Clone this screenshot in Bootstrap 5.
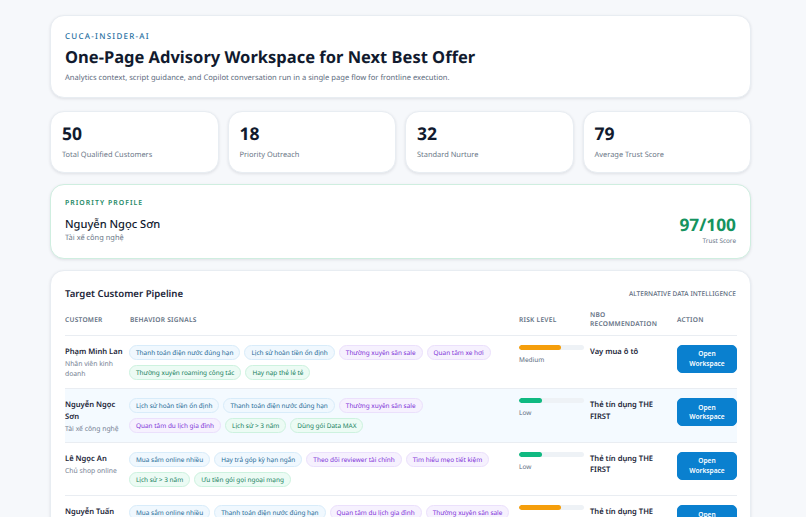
<!DOCTYPE html>
<html lang="vi">
<head>
<meta charset="utf-8">
<title>CUCA-INSIDER-AI</title>
<link href="https://cdn.jsdelivr.net/npm/bootstrap@5.3.0/dist/css/bootstrap.min.css" rel="stylesheet">
<style>
html,body{height:517px;overflow:hidden}
body{background:#f6f8fb;font-family:"Noto Sans",sans-serif;color:#0f172a;padding:15px 55px 0 50px;text-rendering:geometricPrecision}
.panel{background:#fff;border:1px solid #e8edf2;border-radius:14px;box-shadow:0 1px 3px rgba(15,23,42,.1)}
.hero-box{height:83px;padding:15px 14px 0;margin-bottom:13px}
.eyebrow{font-size:8px;letter-spacing:1.25px;color:#1f6f9f;font-weight:500;line-height:12px;margin-bottom:2px}
.hero-title{font-size:16.5px;font-weight:700;line-height:24px;margin:0 0 3px;color:#111a2e}
.hero-sub{font-size:7.6px;line-height:12px;color:#5d6b7e;margin:0}
.kpi-row{display:grid;grid-template-columns:repeat(4,1fr);gap:9px;margin-bottom:11px}
.kpi-box{height:62px;padding:10px 11px 0}
.kpi-num{font-size:17.5px;font-weight:700;line-height:24px;color:#111a2e}
.kpi-lbl{font-size:7.45px;line-height:12px;color:#6b7788;margin-top:3px}
.prio-box{height:75px;border-color:#cfeee0;padding:13px 14px 0;margin-bottom:11px}
.prio-eyebrow{font-size:6.9px;letter-spacing:1.05px;color:#1f8a68;font-weight:600;line-height:12px;margin-bottom:6px}
.prio-name{font-size:11.1px;font-weight:500;line-height:17px;color:#111a2e}
.prio-job{font-size:7.45px;line-height:10px;color:#6b7788}
.score-num{font-size:17.3px;font-weight:700;line-height:20px;color:#15935f;text-align:right}
.score-lbl{font-size:6.4px;line-height:10px;color:#6b7788;text-align:right}
.pipe-box{padding:15px 14px 0;height:400px}
.pipe-title{font-size:9.6px;font-weight:600;line-height:16px;color:#1b2538}
.pipe-tag{font-size:6.5px;letter-spacing:.05px;color:#5d6b7e;font-weight:500}
.pipe-table{table-layout:fixed;width:100%;margin:1px 0 0}
.pipe-table th{font-size:6.6px;font-weight:600;letter-spacing:.25px;color:#667385;line-height:9.5px;padding:1px 8px 0 0;vertical-align:middle;border-bottom:1px solid #e9edf2;height:32px;background:transparent;box-shadow:none}
.pipe-table td{padding:9px 0 0;vertical-align:top;border-bottom:1px solid #e9edf2;height:53.5px;background:transparent;box-shadow:none}
.pipe-table tr.hl td{background:#f4faff;--bs-table-bg:#f4faff}
.cust-name{font-size:7.6px;font-weight:600;line-height:11.5px;color:#1b2538;padding-top:2px}
.cust-job{font-size:6.8px;line-height:10px;color:#758193;margin-top:1px}
.chip-wrap{display:flex;flex-wrap:wrap;gap:5px 4px;padding-right:6px;margin-left:-1px}
.chip{font-size:6.45px;line-height:13px;padding:0 6px;border:1px solid;border-radius:99px;white-space:nowrap;display:inline-block}
.c-b{background:#f0f8fe;border-color:#d8ecfa;color:#1d6a96}
.c-p{background:#f6f1fe;border-color:#ebe0fc;color:#7e32d8}
.c-g{background:#ecfbf4;border-color:#cdf2df;color:#15805c}
.risk-track{height:5px;width:65px;background:#eef2f6;border-radius:9px;overflow:hidden}
.risk-fill{height:100%;border-radius:9px}
.risk-m{background:#f59e0b}
.risk-l{background:#10b981}
.risk-lbl{font-size:6.5px;line-height:10px;margin-top:5px;color:#5d6b7e}
.nbo{font-size:7.6px;font-weight:600;line-height:11.5px;color:#1b2538;padding:2px 8px 0 0}
.open-btn{width:60px;height:28px;background:#0a80cf;border:1px solid #0a80cf;color:#fff;border-radius:5px;font-size:6.6px;font-weight:600;line-height:9.4px;padding:0 8px}
.open-btn:hover{background:#0a80cf;color:#fff}
</style>
</head>
<body>
<section class="panel hero-box">
  <div class="eyebrow">CUCA-INSIDER-AI</div>
  <h1 class="hero-title">One-Page Advisory Workspace for Next Best Offer</h1>
  <p class="hero-sub">Analytics context, script guidance, and Copilot conversation run in a single page flow for frontline execution.</p>
</section>
<section class="kpi-row">
  <div class="panel kpi-box"><div class="kpi-num">50</div><div class="kpi-lbl">Total Qualified Customers</div></div>
  <div class="panel kpi-box"><div class="kpi-num">18</div><div class="kpi-lbl">Priority Outreach</div></div>
  <div class="panel kpi-box"><div class="kpi-num">32</div><div class="kpi-lbl">Standard Nurture</div></div>
  <div class="panel kpi-box"><div class="kpi-num">79</div><div class="kpi-lbl">Average Trust Score</div></div>
</section>
<section class="panel prio-box">
  <div class="prio-eyebrow">PRIORITY PROFILE</div>
  <div class="d-flex justify-content-between align-items-start">
    <div><div class="prio-name">Nguyễn Ngọc Sơn</div><div class="prio-job">Tài xế công nghệ</div></div>
    <div><div class="score-num">97/100</div><div class="score-lbl">Trust Score</div></div>
  </div>
</section>
<section class="panel pipe-box">
  <div class="d-flex justify-content-between align-items-center">
    <div class="pipe-title">Target Customer Pipeline</div>
    <div class="pipe-tag">ALTERNATIVE DATA INTELLIGENCE</div>
  </div>
  <table class="table pipe-table">
    <colgroup><col style="width:65px"><col style="width:389px"><col style="width:71px"><col style="width:87px"><col style="width:60px"></colgroup>
    <thead><tr><th>CUSTOMER</th><th>BEHAVIOR SIGNALS</th><th>RISK LEVEL</th><th>NBO RECOMMENDATION</th><th>ACTION</th></tr></thead>
    <tbody>
      <tr>
        <td><div class="cust-name">Phạm Minh Lan</div><div class="cust-job">Nhân viên kinh doanh</div></td>
        <td><div class="chip-wrap"><span class="chip c-b">Thanh toán điện nước đúng hạn</span><span class="chip c-b">Lịch sử hoàn tiền ổn định</span><span class="chip c-p">Thường xuyên săn sale</span><span class="chip c-p">Quan tâm xe hơi</span><span class="chip c-g">Thường xuyên roaming công tác</span><span class="chip c-g">Hay nạp thẻ lẻ tẻ</span></div></td>
        <td><div class="risk-track"><div class="risk-fill risk-m" style="width:65%"></div></div><div class="risk-lbl">Medium</div></td>
        <td><div class="nbo">Vay mua ô tô</div></td>
        <td><button class="btn open-btn">Open Workspace</button></td>
      </tr>
      <tr class="hl">
        <td><div class="cust-name">Nguyễn Ngọc Sơn</div><div class="cust-job">Tài xế công nghệ</div></td>
        <td><div class="chip-wrap"><span class="chip c-b">Lịch sử hoàn tiền ổn định</span><span class="chip c-b">Thanh toán điện nước đúng hạn</span><span class="chip c-p">Thường xuyên săn sale</span><span class="chip c-p">Quan tâm du lịch gia đình</span><span class="chip c-g">Lịch sử &gt; 3 năm</span><span class="chip c-g">Dùng gói Data MAX</span></div></td>
        <td><div class="risk-track"><div class="risk-fill risk-l" style="width:35%"></div></div><div class="risk-lbl">Low</div></td>
        <td><div class="nbo">Thẻ tín dụng THE FIRST</div></td>
        <td><button class="btn open-btn">Open Workspace</button></td>
      </tr>
      <tr>
        <td><div class="cust-name">Lê Ngọc An</div><div class="cust-job">Chủ shop online</div></td>
        <td><div class="chip-wrap"><span class="chip c-b">Mua sắm online nhiều</span><span class="chip c-b">Hay trả góp kỳ hạn ngắn</span><span class="chip c-p">Theo dõi reviewer tài chính</span><span class="chip c-p">Tìm hiểu mẹo tiết kiệm</span><span class="chip c-g">Lịch sử &gt; 3 năm</span><span class="chip c-g">Ưu tiên gói gọi ngoại mạng</span></div></td>
        <td><div class="risk-track"><div class="risk-fill risk-l" style="width:35%"></div></div><div class="risk-lbl">Low</div></td>
        <td><div class="nbo">Thẻ tín dụng THE FIRST</div></td>
        <td><button class="btn open-btn">Open Workspace</button></td>
      </tr>
      <tr>
        <td><div class="cust-name">Nguyễn Tuấn</div></td>
        <td><div class="chip-wrap"><span class="chip c-b">Mua sắm online nhiều</span><span class="chip c-b">Thanh toán điện nước đúng hạn</span><span class="chip c-p">Quan tâm du lịch gia đình</span><span class="chip c-p">Thường xuyên săn sale</span></div></td>
        <td><div class="risk-track"><div class="risk-fill risk-m" style="width:65%"></div></div></td>
        <td><div class="nbo">Thẻ tín dụng THE FIRST</div></td>
        <td><button class="btn open-btn">Open Workspace</button></td>
      </tr>
    </tbody>
  </table>
</section>
</body>
</html>
